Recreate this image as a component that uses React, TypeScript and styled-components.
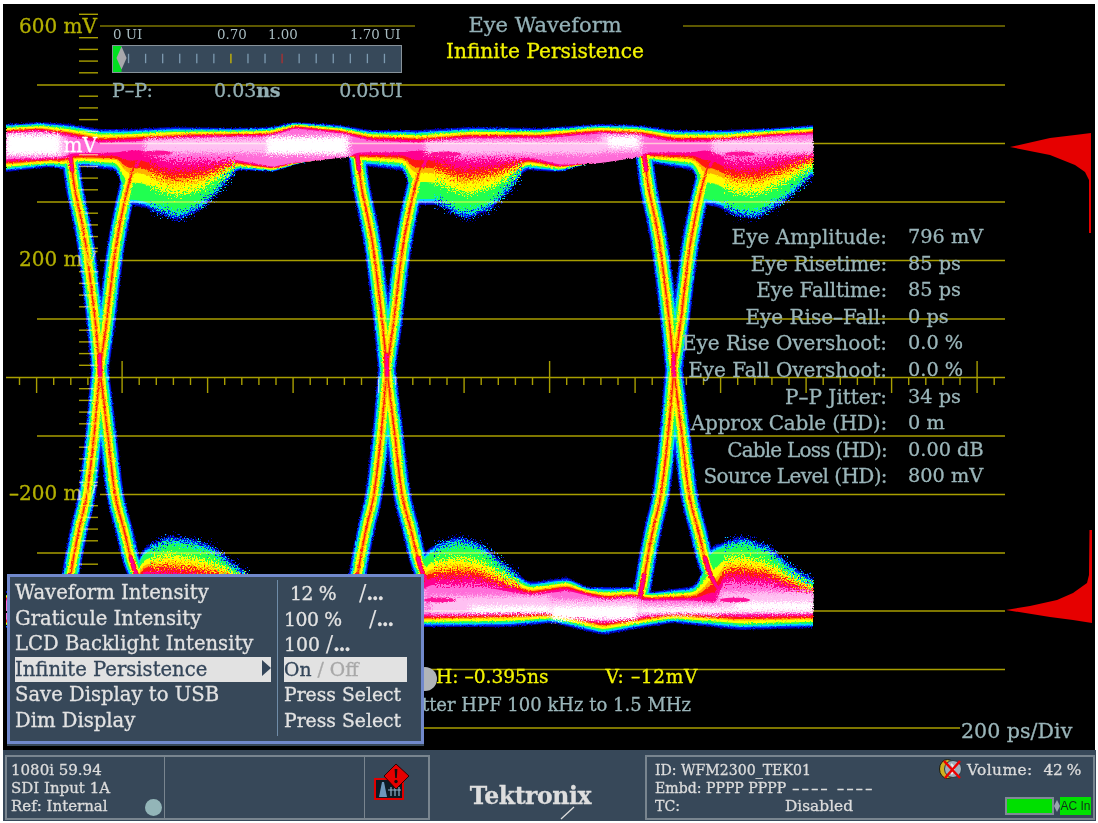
import React from "react";
import styled, { createGlobalStyle } from "styled-components";

type Pt = [number, number];

const GlobalStyle = createGlobalStyle`
  html, body { margin: 0; padding: 0; background: #fff; }
  body { font-family: "DejaVu Serif", "Liberation Serif", serif; }
`;

const Page = styled.div`
  width: 1098px;
  height: 823px;
  padding: 4px 2px 2px 3px;
  box-sizing: border-box;
  display: flex;
  flex-direction: column;
  overflow: hidden;
  -webkit-text-stroke: 0.3px currentColor;
`;
const Screen = styled.div`
  position: relative;
  height: 746px;
  width: 1092px;
  background: #000;
  overflow: hidden;
`;
const Scope = styled.svg`
  position: absolute;
  inset: 0;
  width: 1092px;
  height: 746px;
`;
const Graticule = styled.g`
  mix-blend-mode: screen;
`;

/* ---------- waveform geometry (page pixel coordinates) ---------- */
const interp = (pts: Pt[]) => (x: number) => {
  if (x <= pts[0][0]) return pts[0][1];
  for (let i = 1; i < pts.length; i++) {
    if (x <= pts[i][0]) {
      const [x0, y0] = pts[i - 1];
      const [x1, y1] = pts[i];
      return y0 + ((y1 - y0) * (x - x0)) / (x1 - x0);
    }
  }
  return pts[pts.length - 1][1];
};
const soft = (pts: Pt[]) => {
  const f = interp(pts);
  return (x: number) => (f(x - 3) + f(x) + f(x + 3)) / 3;
};
const spline = (pts: Pt[], dx = 0) => {
  const p = pts.map(([x, y]) => [x + dx, y]);
  let d = `M${p[0][0]} ${p[0][1]}`;
  for (let i = 0; i < p.length - 1; i++) {
    const a = p[Math.max(0, i - 1)];
    const b = p[i];
    const c = p[i + 1];
    const e = p[Math.min(p.length - 1, i + 2)];
    d += `C${(b[0] + (c[0] - a[0]) / 6).toFixed(1)} ${(b[1] + (c[1] - a[1]) / 6).toFixed(1)} ${(c[0] - (e[0] - b[0]) / 6).toFixed(1)} ${(c[1] - (e[1] - b[1]) / 6).toFixed(1)} ${c[0]} ${c[1]}`;
  }
  return d;
};

const topRail = {
  u: soft([[6,124],[40,122],[70,124],[100,129],[130,129],[170,127],[235,128],[270,127],[295,122],[340,125],[370,130],[420,130],[470,127],[540,128],[600,124],[640,125],[673,130],[723,130],[773,128],[814,125]]),
  cu: soft([[6,133],[40,131],[70,136],[100,142],[130,141],[200,137],[270,136],[295,128],[340,133],[370,140],[420,142],[470,138],[540,138],[600,133],[640,135],[673,141],[723,141],[773,136],[814,134]]),
  cl: soft([[6,160],[50,158],[66,157],[70,154],[143,153],[165,163],[207,163],[233,160],[273,167],[293,163],[347,157],[358,153],[430,153],[460,162],[510,160],[530,158],[560,165],[600,163],[640,157],[645,153],[712,153],[730,163],[757,163],[814,153]]),
  l: soft([[6,172],[50,167],[63,170],[80,166],[118,171],[126,205],[143,207],[177,220],[200,210],[220,190],[237,170],[273,172],[300,163],[347,155],[358,165],[405,171],[413,205],[440,205],[465,219],[490,210],[510,190],[525,170],[560,172],[590,163],[640,155],[650,163],[695,171],[703,205],[717,207],[740,217],[757,218],[783,203],[814,175]]),
};
const lowRail = {
  u: soft([[6,592],[130,592],[138,560],[143,548],[170,536],[200,541],[215,548],[240,568],[262,585],[300,585],[350,590],[412,590],[418,560],[430,547],[457,537],[480,543],[500,560],[527,581],[533,582],[567,577],[587,587],[633,587],[650,592],[695,586],[703,570],[708,552],[713,545],[743,537],[770,547],[790,565],[814,580]]),
  cu: soft([[6,600],[130,600],[143,575],[240,585],[300,595],[420,590],[430,583],[473,583],[507,590],[530,595],[567,590],[607,600],[633,597],[643,600],[717,600],[723,580],[767,583],[813,595]]),
  cl: soft([[6,620],[425,615],[553,612],[603,622],[673,612],[740,615],[814,614]]),
  l: soft([[6,628],[425,627],[507,627],[553,623],[603,635],[640,628],[673,623],[740,630],[814,628]]),
};
type Rail = typeof topRail;
const railPoly = (r: Rail, f: number, cap: number) => {
  const top: string[] = [];
  const bot: string[] = [];
  for (let x = 6; x <= 814; x += 3) {
    const hu = r.cu(x) - r.u(x);
    const hl = r.l(x) - r.cl(x);
    const a = r.u(x) + Math.min(f * hu, cap);
    const b = r.l(x) - Math.min(f * hl, cap);
    top.push(`${x},${a.toFixed(1)}`);
    bot.unshift(`${x},${b.toFixed(1)}`);
  }
  return [...top, ...bot].join(" ");
};

const T1: Pt[] = [[70,153],[75,190],[85,240],[95,319],[100,370],[108,436],[115,494],[124,530],[133,565],[147,592],[158,600]];
const T2: Pt[] = [[143,153],[132,172],[117,240],[107,319],[100,370],[94,436],[87,494],[80,525],[74,555],[68,590],[64,602]];
const OFFSETS = [0, 287, 574];
const traces = OFFSETS.flatMap((o) => [spline(T1, o), spline(T2, o)]);
const hotBase: Pt[][] = [
  [[70,153],[72,170]],
  [[143,153],[136,166]],
  [[131,558],[137,576],[147,592],[158,600]],
  [[70,575],[66,598]],
  [[99.5,355],[100,376]],
];
const hot = OFFSETS.flatMap((o) => hotBase.map((h) => spline(h, o)));

const LEVELS = [
  { c: "#0000a8", f: 0, cap: 0, w: 18 },
  { c: "#0030ff", f: 0.1, cap: 1.6, w: 16.5 },
  { c: "#00d8ff", f: 0.2, cap: 3.6, w: 14 },
  { c: "#20ff50", f: 0.32, cap: 6, w: 11 },
  { c: "#ffff00", f: 0.44, cap: 999, w: 8 },
  { c: "#ffb000", f: 0.62, cap: 999, w: 4 },
  { c: "#ff1810", f: 0.72, cap: 999, w: 1.5 },
  { c: "#ff0090", f: 0.86, cap: 999, w: 0 },
];
const levelPolys = LEVELS.map((l) => [railPoly(topRail, l.f, l.cap), railPoly(lowRail, l.f, l.cap)]);
const corePolys = [railPoly(topRail, 1.05, 999), railPoly(lowRail, 1.05, 999)];

const PALE: [number, number, number, number][] = [
  [6, 137, 60, 19], [145, 139, 120, 14], [265, 136, 85, 19], [425, 141, 175, 13], [600, 135, 42, 17], [712, 140, 102, 13],
  [430, 596, 120, 18], [550, 600, 90, 17], [640, 604, 80, 11], [720, 592, 94, 21], [145, 590, 280, 22],
];
const WHITE: [number, number, number, number][] = [
  [6, 134, 54, 21], [267, 137, 80, 17], [608, 136, 30, 11], [552, 606, 85, 14], [470, 606, 80, 7], [735, 602, 79, 9], [640, 608, 100, 4],
];
const HOTSPOTS: [number, number, number, number][] = [
  [158, 153, 14, 2.5], [445, 154, 16, 2.5], [740, 154, 15, 2.5], [440, 600, 16, 2.5], [735, 600, 15, 2.5],
];
const SPECK_RECTS: [number, number, number, number][] = [
  [150, 152, 85, 72], [434, 155, 88, 70], [724, 152, 90, 72], [150, 530, 100, 55], [434, 530, 86, 58], [724, 530, 90, 62],
];

const MAJOR = [26, 85, 143.5, 202, 260.5, 319, 377.5, 436, 494.5, 553, 611, 669.5, 728];
const lineStart = (i: number) => (i % 2 === 0 ? 100 : 37);
const vTicks: number[] = [];
for (let y = 14.3; y < 575; y += 11.7) {
  if (!MAJOR.some((m) => Math.abs(m - y) < 3)) vTicks.push(y);
}
const hTicks: number[] = [];
for (let i = 0; 19.5 + i * 17.1 < 1004; i++) hTicks.push(19.5 + i * 17.1);

const Waveform = () => (
  <Scope viewBox="3 4 1092 746">
    <defs>
      <clipPath id="plot"><rect x="6" y="100" width="808" height="560" /></clipPath>
      <clipPath id="bumps">
        {SPECK_RECTS.map(([x, y, w, h], i) => <rect key={i} x={x} y={y} width={w} height={h} />)}
      </clipPath>
      <filter id="edge" filterUnits="userSpaceOnUse" x="0" y="100" width="830" height="560" colorInterpolationFilters="sRGB">
        <feTurbulence type="fractalNoise" baseFrequency="0.6" numOctaves="2" seed="4" result="n" />
        <feDisplacementMap in="SourceGraphic" in2="n" scale="3" xChannelSelector="R" yChannelSelector="G" />
      </filter>
      <filter id="speck" filterUnits="userSpaceOnUse" x="0" y="100" width="830" height="560" colorInterpolationFilters="sRGB">
        <feTurbulence type="fractalNoise" baseFrequency="0.7" numOctaves="2" seed="9" result="n" />
        <feDisplacementMap in="SourceGraphic" in2="n" scale="24" xChannelSelector="G" yChannelSelector="R" />
      </filter>
      <filter id="soft" filterUnits="userSpaceOnUse" x="0" y="100" width="830" height="560" colorInterpolationFilters="sRGB">
        <feGaussianBlur in="SourceGraphic" stdDeviation="1.6" result="b" />
        <feTurbulence type="fractalNoise" baseFrequency="0.8" numOctaves="2" seed="15" result="n" />
        <feDisplacementMap in="b" in2="n" scale="14" xChannelSelector="R" yChannelSelector="B" />
      </filter>
    </defs>
    <g clipPath="url(#plot)">
      <g filter="url(#edge)">
        {LEVELS.map((l, i) => (
          <g key={l.c}>
            <polygon points={levelPolys[i][0]} fill={l.c} />
            <polygon points={levelPolys[i][1]} fill={l.c} />
            {l.w > 0 && traces.map((d, k) => <path key={k} d={d} fill="none" stroke={l.c} strokeWidth={l.w} />)}
            {i >= 6 && hot.map((d, k) => <path key={k} d={d} fill="none" strokeLinecap="round" stroke={l.c} strokeWidth={i === 6 ? 5 : 3} />)}
          </g>
        ))}
        <polygon points={corePolys[0]} fill="#ff6cd8" />
        <polygon points={corePolys[1]} fill="#ff6cd8" />
      </g>
      <g clipPath="url(#bumps)">
        <g filter="url(#speck)">
          {LEVELS.map((l, i) => (
            <g key={l.c}>
              <polygon points={levelPolys[i][0]} fill={l.c} />
              <polygon points={levelPolys[i][1]} fill={l.c} />
            </g>
          ))}
          <polygon points={corePolys[0]} fill="#ff6cd8" />
          <polygon points={corePolys[1]} fill="#ff6cd8" />
        </g>
      </g>
      <g filter="url(#soft)">
        {PALE.map(([x, y, w, h], i) => <rect key={i} x={x} y={y} width={w} height={h} fill="#ffc0f2" />)}
        {WHITE.map(([x, y, w, h], i) => <rect key={i} x={x} y={y} width={w} height={h} fill="#ffffff" />)}
      </g>
      <g filter="url(#edge)">
        {HOTSPOTS.map(([x, y, rx, ry], i) => <ellipse key={i} cx={x} cy={y} rx={rx} ry={ry} fill="#ff1098" />)}
      </g>
    </g>
    <Graticule stroke="#a89e00" strokeWidth="1.4" fill="none">
      <line x1="100" y1="26" x2="415" y2="26" stroke="#7c7600" />
      <line x1="683" y1="26" x2="1005" y2="26" stroke="#7c7600" />
      {MAJOR.slice(1).map((y, i) => (
        y === 377.5 ? null : <line key={y} x1={lineStart(i + 1)} y1={y} x2={y === 728 ? 960 : 1005} y2={y} />
      ))}
      <line x1="6" y1="377.5" x2="1005" y2="377.5" />
      {hTicks.map((x, i) => (
        <line key={x} x1={x} y1={i % 25 === 6 ? 361 : 377.5} x2={x} y2={i % 5 === 1 ? 393 : 385} />
      ))}
      {vTicks.map((y) => <line key={y} x1="79" y1={y} x2="98" y2={y} />)}
    </Graticule>
    <path fill="#e60000" d="M1010 147 L1050 138 L1075 135 L1091 133 L1091 233 L1089 233 L1089 180 L1085 172 L1075 165 L1050 155 Z" />
    <path fill="#e60000" d="M1006 610 L1030 606 L1057 600 L1073 593 L1087 583 L1089 575 L1089.5 530 L1092 530 L1092 623 L1073 620 L1050 617 Z" />
  </Scope>
);

/* ---------- overlays on the scope ---------- */
const ScaleLabel = styled.div<{ $top: number; $white?: boolean }>`
  position: absolute;
  left: 0;
  top: ${(p) => p.$top}px;
  width: 94px;
  text-align: right;
  font-size: 20px;
  line-height: 24px;
  white-space: nowrap;
  color: ${(p) => (p.$white ? "#ffffff" : "#b4b000")};
  mix-blend-mode: screen;
`;
const Title = styled.div`
  position: absolute;
  left: 402px;
  top: 8px;
  width: 280px;
  text-align: center;
`;
const TitleMain = styled.div`
  font-size: 21px;
  line-height: 26px;
  color: #93b0b6;
`;
const TitleSub = styled.div`
  font-size: 20.2px;
  line-height: 26px;
  color: #f2f200;
`;
const Jitter = styled.div`
  position: absolute;
  left: 109px;
  top: 20px;
  width: 290px;
`;
const JitterScale = styled.div`
  display: flex;
  height: 20px;
  align-items: center;
  font-size: 13.4px;
  -webkit-text-stroke: 0;
  color: #a8bcc0;
`;
const JitterTick = styled.span<{ $x: number }>`
  position: absolute;
  left: ${(p) => p.$x}px;
  white-space: nowrap;
`;
const Meter = styled.div`
  position: relative;
  height: 28px;
  margin-top: 1px;
  box-sizing: border-box;
  border: 1.5px solid #87929a;
  background: #37495a;
`;
const MeterSvg = styled.svg`
  display: block;
  width: 100%;
  height: 100%;
`;
const JitterRead = styled.div`
  display: grid;
  grid-template-columns: 102px 125px 1fr;
  margin-top: 5px;
  font-size: 19px;
  line-height: 24px;
  color: #93aeb2;
`;
const JitterRight = styled.span`
  text-align: right;
  letter-spacing: -0.5px;
`;
const Unit = styled.span`
  font-weight: 700;
  letter-spacing: -0.5px;
`;
const Stats = styled.div`
  position: absolute;
  left: 547px;
  top: 220px;
  display: grid;
  grid-template-columns: 337px auto;
  column-gap: 21px;
  grid-auto-rows: 26.6px;
  font-size: 19.3px;
  line-height: 26.6px;
  color: #9ab5b9;
  white-space: nowrap;
`;
const StatLabel = styled.span<{ $tight: number }>`
  text-align: right;
  font-size: 20px;
  letter-spacing: ${(p) => p.$tight}px;
`;
const Cursor = styled.div`
  position: absolute;
  left: 433px;
  top: 660px;
  display: flex;
  font-size: 18.6px;
  line-height: 26px;
  color: #f2f200;
  white-space: nowrap;
`;
const CursorV = styled.span`
  margin-left: 57px;
  letter-spacing: 0.6px;
`;
const CursorDot = styled.div`
  position: absolute;
  left: 410px;
  top: 663px;
  width: 24px;
  height: 24px;
  border-radius: 50%;
  background: #b0b4b8;
`;
const FilterNote = styled.div`
  position: absolute;
  right: 404px;
  top: 688px;
  font-size: 18px;
  line-height: 26px;
  color: #9ab5b9;
  white-space: nowrap;
`;
const TimeBase = styled.div`
  position: absolute;
  left: 958px;
  top: 714px;
  font-size: 20.6px;
  line-height: 26px;
  color: #9ab5b9;
  white-space: nowrap;
`;

/* ---------- menu ---------- */
const Menu = styled.div`
  position: absolute;
  left: 4px;
  top: 570px;
  width: 417px;
  height: 170px;
  box-sizing: border-box;
  background: #374859;
  border: 3px solid #7189cc;
  box-shadow: 0 2px 0 #37485a;
  padding: 3px 5px 0 5px;
  display: grid;
  grid-template-columns: 256px 1fr;
  column-gap: 12px;
`;
const MenuColumn = styled.div<{ $divided?: boolean }>`
  display: flex;
  flex-direction: column;
  font-size: ${(p) => (p.$divided ? "18.8px" : "19.6px")};
  ${(p) => (p.$divided ? "border-left: 1px solid #6f8ca8; margin-left: -6px; padding-left: 6px; height: 156px;" : "")}
`;
const MenuRow = styled.div<{ $active?: boolean; $narrow?: boolean }>`
  position: relative;
  height: 25.6px;
  line-height: 25.6px;
  white-space: nowrap;
  color: ${(p) => (p.$active ? "#34465a" : "#e2e2e2")};
  background: ${(p) => (p.$active ? "#e2e2e2" : "transparent")};
  ${(p) => (p.$narrow ? "width: 123px;" : "")}
`;
const Arrow = styled.span`
  position: absolute;
  right: 0;
  top: 3px;
  width: 0;
  height: 0;
  border-left: 9px solid #34465a;
  border-top: 8px solid transparent;
  border-bottom: 8px solid transparent;
`;
const Off = styled.span`
  color: #a8a8a8;
`;
const Amount = styled.span<{ $w: number; $pad?: number }>`
  display: inline-block;
  width: ${(p) => p.$w}px;
  padding-left: ${(p) => p.$pad || 0}px;
  box-sizing: border-box;
  letter-spacing: -0.4px;
`;
const Slash = styled.span`
  font-size: 22px;
  font-weight: 400;
  -webkit-text-stroke: 0;
`;
const Dots = styled.span`
  font-weight: 700;
  letter-spacing: -1px;
`;

/* ---------- status bar ---------- */
const Bar = styled.div`
  flex: 1;
  display: flex;
  background: #374859;
  padding: 5px 1px 1px 2px;
  box-sizing: border-box;
  color: #dcdcdc;
`;
const StatusBox = styled.div`
  display: flex;
  border: 2px solid #79858f;
  box-sizing: border-box;
  height: 65px;
`;
const StatusCell = styled.div<{ $w: number }>`
  position: relative;
  width: ${(p) => p.$w}px;
  box-sizing: border-box;
  padding: 4px 0 0 4px;
  font-size: 15px;
  line-height: 18px;
  & + & { border-left: 1.5px solid #79858f; }
`;
const Line = styled.div`
  white-space: nowrap;
`;
const RefDot = styled.span`
  position: absolute;
  left: 138px;
  top: 42px;
  width: 17px;
  height: 17px;
  border-radius: 50%;
  background: #93b5b8;
`;
const WarnIcon = styled.svg`
  position: absolute;
  left: 9px;
  top: 6px;
  width: 36px;
  height: 40px;
`;
const Logo = styled.div`
  flex: 1;
  position: relative;
  text-align: center;
  padding-right: 14px;
  padding-top: 28px;
  font-size: 23.5px;
  font-weight: 700;
  letter-spacing: -0.4px;
  color: #dedede;
  line-height: 26px;
`;
const LogoTick = styled.svg`
  position: absolute;
  left: 130px;
  bottom: 0;
  width: 16px;
  height: 14px;
`;
const RightBox = styled(StatusBox)`
  width: 450px;
  flex-direction: column;
  padding: 4px 8px 0 8px;
  font-size: 14.1px;
  line-height: 18px;
`;
const RightRow = styled.div`
  display: flex;
  align-items: center;
  height: 18px;
  white-space: nowrap;
`;
const Dashes = styled.span`
  margin-left: 6px;
  letter-spacing: 2.4px;
`;
const VolumeIcon = styled.svg`
  margin-left: auto;
  width: 24px;
  height: 24px;
  margin-right: 4px;
  margin-top: -3px;
`;
const VolText = styled.span`
  width: 118px;
  display: flex;
  font-size: 15.4px;
  letter-spacing: 0.4px;
`;
const VolPct = styled.span`
  margin-left: 11px;
  letter-spacing: -0.4px;
`;
const Disabled = styled.span`
  margin-left: 105px;
  font-size: 15.4px;
`;
const Battery = styled.div`
  margin-left: auto;
  width: 49px;
  height: 18px;
  box-sizing: border-box;
  border: 2px solid #7f8b95;
  background: #00e000;
`;
const Nub = styled.div`
  width: 6px;
  height: 12px;
  background: #9aa5ae;
  clip-path: polygon(50% 0, 100% 50%, 50% 100%, 0 50%);
`;
const AcIn = styled.div`
  width: 31px;
  height: 18px;
  background: #00e000;
  color: #10301a;
  font-family: "Liberation Sans", sans-serif;
  font-size: 12px;
  -webkit-text-stroke: 0;
  line-height: 18px;
  text-align: center;
  margin-right: -6px;
`;

const STATS: [string, string, number][] = [
  ["Eye Amplitude:", "796 mV", 0],
  ["Eye Risetime:", "85 ps", -0.25],
  ["Eye Falltime:", "85 ps", -0.2],
  ["Eye Rise–Fall:", "0 ps", 0],
  ["Eye Rise Overshoot:", "0.0 %", 0],
  ["Eye Fall Overshoot:", "0.0 %", 0],
  ["P–P  Jitter:", "34 ps", 0],
  ["Approx Cable (HD):", "0 m", -0.2],
  ["Cable Loss (HD):", "0.00 dB", -0.8],
  ["Source Level (HD):", "800 mV", -0.6],
];
const MENU_ITEMS = ["Waveform Intensity", "Graticule Intensity", "LCD Backlight Intensity", "Infinite Persistence", "Save Display to USB", "Dim Display"];

const JITTER_TICKS = Array.from({ length: 16 }, (_, i) => 129 + i * 17);

const More = () => (
  <>
    <Slash>/</Slash>
    <Dots>...</Dots>
  </>
);

export default function App() {
  return (
    <Page>
      <GlobalStyle />
      <Screen>
        <Waveform />
        <ScaleLabel $top={10}>600 mV</ScaleLabel>
        <ScaleLabel $top={129} $white>mV</ScaleLabel>
        <ScaleLabel $top={243}>200 mV</ScaleLabel>
        <ScaleLabel $top={477}>–200 mV</ScaleLabel>
        <Title>
          <TitleMain>Eye Waveform</TitleMain>
          <TitleSub>Infinite Persistence</TitleSub>
        </Title>
        <Jitter>
          <JitterScale>
            <JitterTick $x={1}>0 UI</JitterTick>
            <JitterTick $x={105}>0.70</JitterTick>
            <JitterTick $x={156}>1.00</JitterTick>
            <JitterTick $x={238}>1.70 UI</JitterTick>
          </JitterScale>
          <Meter>
            <MeterSvg viewBox="113.5 46.5 287 25" preserveAspectRatio="none">
              <rect x="113" y="45" width="9" height="27" fill="#00e020" />
              <path d="M122 47 L127 58 L122 69 L117 58 Z" fill="#a8a8ac" />
              {JITTER_TICKS.map((x, i) => (
                <line key={x} x1={x} x2={x} y1="54" y2="63" strokeWidth="1.3" stroke={i === 6 ? "#d0bc00" : i === 9 ? "#b03030" : "#7d9ab0"} />
              ))}
            </MeterSvg>
          </Meter>
          <JitterRead>
            <span>P–P:</span>
            <span>0.03<Unit>ns</Unit></span>
            <JitterRight>0.05UI</JitterRight>
          </JitterRead>
        </Jitter>
        <Stats>
          {STATS.map(([k, v, t]) => (
            <React.Fragment key={k}>
              <StatLabel $tight={t}>{k}</StatLabel>
              <span>{v}</span>
            </React.Fragment>
          ))}
        </Stats>
        <CursorDot />
        <Cursor>H: –0.395ns<CursorV>V: –12mV</CursorV></Cursor>
        <FilterNote>Jitter HPF 100 kHz to 1.5 MHz</FilterNote>
        <TimeBase>200 ps/Div</TimeBase>
        <Menu>
          <MenuColumn>
            {MENU_ITEMS.map((m, i) => (
              <MenuRow key={m} $active={i === 3}>
                {m}
                {i === 3 && <Arrow />}
              </MenuRow>
            ))}
          </MenuColumn>
          <MenuColumn $divided>
            <MenuRow><Amount $w={75} $pad={6}>12 %</Amount><More /></MenuRow>
            <MenuRow><Amount $w={85}>100 %</Amount><More /></MenuRow>
            <MenuRow>100 <More /></MenuRow>
            <MenuRow $active $narrow>On <Off>/ Off</Off></MenuRow>
            <MenuRow>Press Select</MenuRow>
            <MenuRow>Press Select</MenuRow>
          </MenuColumn>
        </Menu>
      </Screen>
      <Bar>
        <StatusBox>
          <StatusCell $w={157}>
            <Line>1080i 59.94</Line>
            <Line>SDI Input 1A</Line>
            <Line>Ref: Internal</Line>
            <RefDot />
          </StatusCell>
          <StatusCell $w={200} />
          <StatusCell $w={64}>
            <WarnIcon viewBox="0 0 36 40">
              <rect x="1" y="16" width="28" height="20" fill="#0c1a24" stroke="#e00000" strokeWidth="2" />
              <path d="M5 34 L8 19 L10 19 L13 34 Z" fill="#6d97bb" />
              <path d="M14 27 H27 M17 24 V33 M21 24 V33 M25 24 V33" stroke="#8fb0c8" strokeWidth="1.2" fill="none" />
              <path d="M22 1 L35 13 L22 26 L10 13 Z" fill="#e60000" stroke="#300000" strokeWidth="1" />
              <path d="M20.6 6 H23.4 L22.8 15 H21.2 Z" fill="#111" />
              <circle cx="22" cy="18.5" r="1.7" fill="#111" />
            </WarnIcon>
          </StatusCell>
        </StatusBox>
        <Logo>
          Tektronix
          <LogoTick viewBox="0 0 16 14">
            <path d="M1 13 L14 1" stroke="#dedede" strokeWidth="1.3" fill="none" />
          </LogoTick>
        </Logo>
        <RightBox>
          <RightRow>
            ID: WFM2300_TEK01
            <VolumeIcon viewBox="0 0 24 24">
              <ellipse cx="8.5" cy="12" rx="8" ry="9.5" fill="#d0b020" stroke="#1a1a10" strokeWidth="1" />
              <circle cx="14" cy="12" r="8.5" fill="#9fb0bc" stroke="#2a3a44" strokeWidth="1" />
              <path d="M12 7 A6 6 0 0 1 12 17" fill="none" stroke="#e8e8e8" strokeWidth="2" />
              <path d="M5 4 L21 21 M21 4 L6 21" stroke="#ee0000" strokeWidth="2.4" />
            </VolumeIcon>
            <VolText>Volume:<VolPct>42 %</VolPct></VolText>
          </RightRow>
          <RightRow>Embd: PPPP PPPP<Dashes>–––– ––––</Dashes></RightRow>
          <RightRow>
            TC:
            <Disabled>Disabled</Disabled>
            <Battery />
            <Nub />
            <AcIn>AC In</AcIn>
          </RightRow>
        </RightBox>
      </Bar>
    </Page>
  );
}
